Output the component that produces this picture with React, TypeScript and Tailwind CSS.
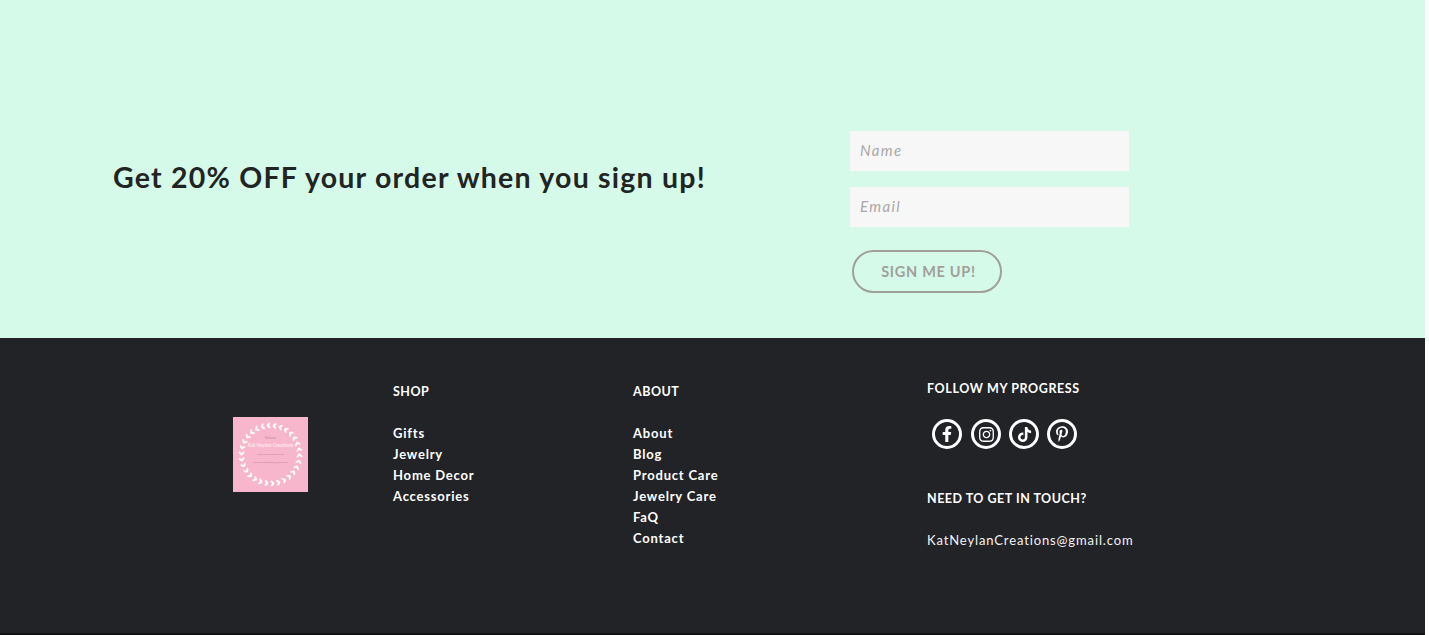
import { FaFacebookF, FaInstagram, FaPinterestP, FaTiktok } from "react-icons/fa";
import type { ReactNode } from "react";

const font = "font-['Lato','Noto_Sans',sans-serif]";

const shopLinks = ["Gifts", "Jewelry", "Home Decor", "Accessories"];
const aboutLinks = ["About", "Blog", "Product Care", "Jewelry Care", "FaQ", "Contact"];

function Logo() {
  const leaves = Array.from({ length: 30 }, (_, i) => (i / 30) * Math.PI * 2);
  return (
    <div className="mt-[79px] h-[75px] w-[75px] shrink-0 bg-[#f8b6cc]">
      <svg viewBox="0 0 75 75" className="h-full w-full">
        {leaves.map((a, i) => {
          const cx = 37.5 + Math.cos(a) * 29;
          const cy = 37.5 + Math.sin(a) * 29;
          const deg = (a * 180) / Math.PI;
          return (
            <g key={i} fill="#fff" opacity={0.92}>
              <ellipse cx={cx} cy={cy} rx={2.4} ry={1.1} transform={`rotate(${deg + 45} ${cx} ${cy}) translate(1.5 0)`} />
              <ellipse cx={cx} cy={cy} rx={2.4} ry={1.1} transform={`rotate(${deg + 135} ${cx} ${cy}) translate(1.5 0)`} />
            </g>
          );
        })}
        <text x="37.5" y="22" textAnchor="middle" fontSize="2.8" fill="#c48aa0">Welcome</text>
        <text x="37.5" y="30" textAnchor="middle" fontSize="4.8" fontWeight="700" fill="#fde8ef">Kat Neylan Creations</text>
        <text x="37.5" y="38" textAnchor="middle" fontSize="2.6" fill="#b98398">katneylancreations.com</text>
        <text x="37.5" y="46" textAnchor="middle" fontSize="2.6" fill="#b98398">katneylancreations@gmail.com</text>
      </svg>
    </div>
  );
}

function LinkColumn({ title, links, width }: { title: string; links: string[]; width: string }) {
  return (
    <div className={`${width} shrink-0 pt-[45px]`}>
      <h4 className="text-[12.5px] leading-[18px] font-bold tracking-[0.5px] text-white">{title}</h4>
      <ul className="mt-[22px] text-[13px] leading-[21px] font-bold tracking-[0.8px] text-white">
        {links.map((l) => (
          <li key={l}>{l}</li>
        ))}
      </ul>
    </div>
  );
}

function SocialIcon({ children, className }: { children: ReactNode; className?: string }) {
  return (
    <a
      href="#"
      className={`flex h-[30px] w-[30px] items-center justify-center rounded-full border-[3px] border-white text-white ${className ?? ""}`}
    >
      {children}
    </a>
  );
}

export default function App() {
  return (
    <div className={`${font} h-[635px] w-[1429px] overflow-hidden bg-white`}>
      <div className="w-[1425px]">
        <section className="flex h-[338px] bg-[#d5faea]">
          <div className="w-[850px] shrink-0 pt-[158px] pl-[113px]">
            <h2 className="text-[28.5px] leading-[38px] font-bold tracking-[1.22px] whitespace-nowrap text-[#222422]">
              Get 20% OFF your order when you sign up!
            </h2>
          </div>
          <form className="w-[279px] pt-[131px]">
            <input
              placeholder="Name"
              className="block h-10 w-full bg-[#f7f7f7] px-[10px] pb-[2px] text-[15px] tracking-[1.4px] italic outline-none placeholder:text-[#a8a8a8]"
            />
            <input
              placeholder="Email"
              className="mt-4 block h-10 w-full bg-[#f7f7f7] px-[10px] pb-[2px] text-[15px] tracking-[1.4px] italic outline-none placeholder:text-[#a8a8a8]"
            />
            <button
              type="button"
              className="mt-[23px] ml-[2px] h-[43px] w-[150px] rounded-[22px] border-2 border-[#a09f9a] pl-[3px] text-[14.5px] font-bold tracking-[0.7px] text-[#a09f9a]"
            >
              SIGN ME UP!
            </button>
          </form>
        </section>

        <footer className="flex h-[295px] bg-[#222327] pl-[233px]">
          <Logo />
          <div className="w-[85px] shrink-0" />
          <LinkColumn title="SHOP" links={shopLinks} width="w-[240px]" />
          <LinkColumn title="ABOUT" links={aboutLinks} width="w-[294px]" />
          <div className="pt-[42px] text-white">
            <h4 className="text-[12.5px] leading-[18px] font-bold tracking-[0.6px]">FOLLOW MY PROGRESS</h4>
            <div className="mt-[21px] flex pl-[5px]">
              <SocialIcon><FaFacebookF size={16} /></SocialIcon>
              <SocialIcon className="ml-[9px]"><FaInstagram size={17} /></SocialIcon>
              <SocialIcon className="ml-2"><FaTiktok size={15} /></SocialIcon>
              <SocialIcon className="ml-2"><FaPinterestP size={16} /></SocialIcon>
            </div>
            <h4 className="mt-[41px] text-[12.5px] leading-[18px] font-bold tracking-[0.5px]">NEED TO GET IN TOUCH?</h4>
            <p className="mt-[23px] text-[13px] leading-[18px] tracking-[0.88px] text-[#f2f2f2]">KatNeylanCreations@gmail.com</p>
          </div>
        </footer>
      </div>
      <div className="h-[2px] w-[1425px] bg-[#111214]" />
    </div>
  );
}
